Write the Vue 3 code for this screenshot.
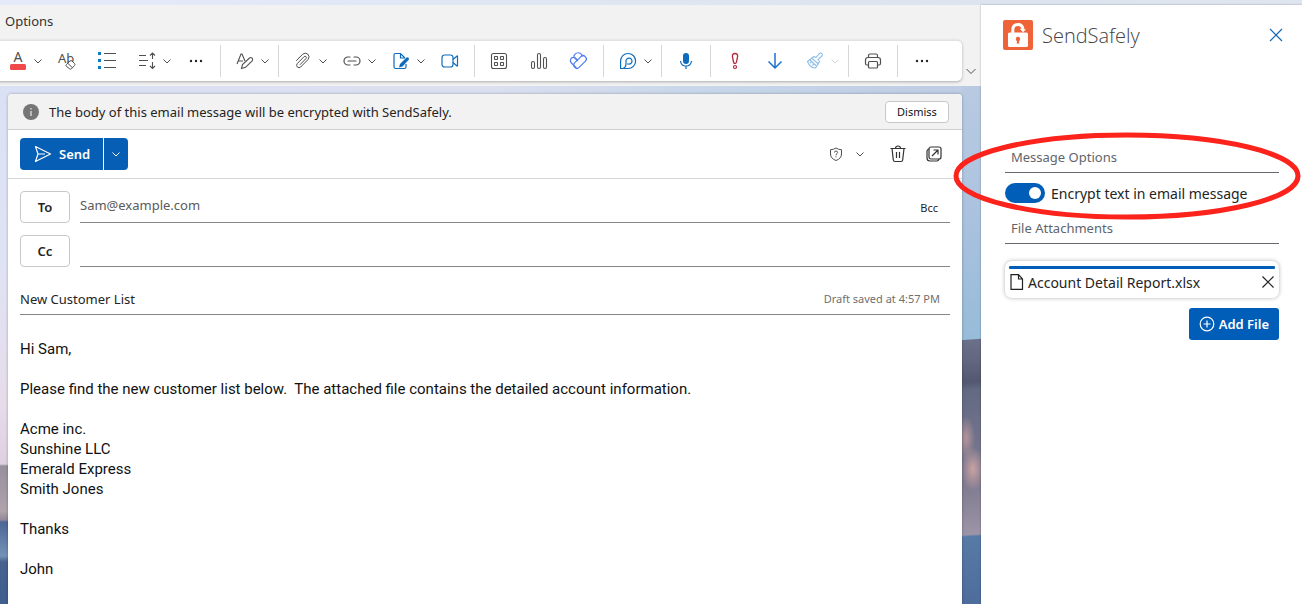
<script setup>
import { ref } from 'vue'

const gray = '#505050'
const blue = '#0f6cbd'

const icons = {
  fontColor: `<text x="10" y="11" text-anchor="middle" font-size="14" font-family="Noto Sans, sans-serif" fill="${gray}">A</text><rect x="2" y="13" width="16" height="6" rx="1.5" fill="#f0494c"/>`,
  clearFormat: `<text x="1" y="12" font-size="13" font-family="Noto Sans, sans-serif" fill="${gray}">Ab</text><path d="M9.300 13.700 13 10q1-1 2 0l2.500 2.500q1 1 0 2L14.500 17.700q-1 1-2 0l-3.200-2.400q-.8-.8 0-1.600Z" fill="#fff" stroke="${gray}"/><path d="m10.800 12.300 4.600 4.400" stroke="${gray}" fill="none"/>`,
  bullets: `<path d="M1 1h3v3H1zM1 8h3v3H1zM1 15h3v3H1z" fill="#0a7cc4"/><path d="M7 2.5h12M7 9.5h12M7 16.5h12" stroke="${gray}"/>`,
  spacing: `<path d="M2 4.5h7M2 9.5h9M2 14.5h7M15.500 2v6M15.500 11v6.500M13 4.500 15.500 2 18 4.500M13 15l2.500 2.500L18 15" fill="none" stroke="${gray}" stroke-width="1.1"/>`,
  more: `<g fill="#242424"><circle cx="5" cy="10" r="1.200"/><circle cx="10" cy="10" r="1.200"/><circle cx="15" cy="10" r="1.200"/></g>`,
  styles: `<path d="M2 13 6 3h1l3 7M3.500 10h4.500" fill="none" stroke="${gray}" stroke-width="1.100"/><path d="m6.500 17.500 1-4 7-6.500q1.500-1 2.600.2t.1 2.600l-6.700 6.500Z" fill="#fff" stroke="${gray}" stroke-width="1.100"/>`,
  attach: `<path d="m3.500 9.500 6-6.200q2.800-2.300 5.300-.2 2.500 2.700.2 5.400l-7.300 7.500q-1.700 1.500-3.400 0-1.500-1.700 0-3.400l6.800-7q1-.8 1.900 0 .8 1 0 1.900l-5.800 6" fill="none" stroke="${gray}" stroke-linecap="round"/>`,
  link: `<path d="M8 6H6a4 4 0 0 0 0 8h2M12 6h2a4 4 0 0 1 0 8h-2M6 10h8" fill="none" stroke="${gray}" stroke-width="1.200" stroke-linecap="round"/>`,
  sign: `<path d="M15 13v3q0 1.500-1.500 1.500h-9Q3 17.500 3 16V4q0-1.500 1.500-1.500H9.500L14 7M9.500 2.500V7H14" fill="none" stroke="${blue}" stroke-width="1.200"/><path d="m8 16.500 1-3.500L15.500 6.500q1-.8 2 .2t.2 2L11.500 15.500Z" fill="${blue}"/>`,
  camera: `<rect x="2" y="4" width="11" height="12" rx="2.500" fill="none" stroke="${blue}" stroke-width="1.200"/><path d="m13 8.500 4-3.500q.5-.3.500.3v9.400q0 .6-.5.300l-4-3.500" fill="none" stroke="${blue}" stroke-width="1.200"/>`,
  apps: `<g fill="none" stroke="${gray}" stroke-width="1.100"><rect x="2.500" y="2.500" width="15" height="15" rx="2"/><rect x="5.500" y="5.500" width="3" height="3" rx=".5"/><rect x="11.500" y="5.500" width="3" height="3" rx=".5"/><rect x="5.500" y="11.500" width="3" height="3" rx=".5"/><rect x="11.500" y="11.500" width="3" height="3" rx=".5"/></g>`,
  poll: `<g fill="none" stroke="${gray}" stroke-width="1.100"><rect x="2.500" y="10.500" width="3" height="7" rx="1.500"/><rect x="8.500" y="2.500" width="3" height="15" rx="1.500"/><rect x="14.500" y="6.500" width="3" height="11" rx="1.500"/></g>`,
  viva: `<g fill="none" stroke="#4f7df0" stroke-width="1.200"><path d="M7.400 17 2 11.500Q.7 9.500 2 7.500q2-2 4.300-.500L9 9.700"/><path d="M5 6.500Q4.500 4.500 6 3.200 8.500.700 11.500 2.500 13 3.500 13.500 5.500M5.500 6.500 8.700 10"/><rect x="3.500" y="7.800" width="15" height="6.400" rx="3" transform="rotate(-45 11 11)"/></g>`,
  loop: `<path d="M2.600 17.500V10A7.500 7.500 0 1 1 10 17.500Z" fill="none" stroke="${blue}" stroke-width="1.200"/><path d="M5 17.500q3-1 3-5V10a3 3 0 1 1 2.500 3h-1.500" fill="none" stroke="${blue}" stroke-width="1.200"/>`,
  mic: `<rect x="7" y="2" width="6" height="11" rx="3" fill="${blue}"/><path d="M4.500 10q.5 5 5.500 5t5.500-5M10 15v3" fill="none" stroke="${blue}" stroke-width="1.200"/>`,
  important: `<path d="M10 2.500q2.800 0 2.600 2.800L11.500 11q-.3 1.500-1.500 1.500T8.500 11L7.400 5.300Q7.200 2.500 10 2.500Z" fill="none" stroke="#b3283a" stroke-width="1.300"/><circle cx="10" cy="16" r="1.500" fill="none" stroke="#b3283a" stroke-width="1.200"/>`,
  low: `<path d="M10 2v15M3.500 10.500 10 17l6.500-6.500" fill="none" stroke="#1a73cf" stroke-width="1.500"/>`,
  brush: `<g fill="none" stroke="#8dbfe8" stroke-width="1.100"><path d="m11 6.500 3.500-4q1.200-1 2.400 0 1.200 1.300 0 2.500L13 8.500l1.500 2-4 6.500q-5.500 0-8-6.500L9 5.500Z"/><path d="m6.500 7 7 6M5 12l2-1.500M7.500 14.500l2-2M4.500 8.500l7 6.500"/></g>`,
  print: `<g fill="none" stroke="${gray}" stroke-width="1.200"><path d="M5.500 14H4q-1.500 0-1.500-1.500V9Q2.500 6.500 5 6.500h10q2.500 0 2.500 2.500v3.500Q17.500 14 16 14h-1.500"/><path d="M5.500 6.500V4.500Q5.500 3 7 3h6q1.500 0 1.500 1.500v2"/><rect x="5.500" y="10.500" width="9" height="6.500" rx="1"/></g>`,
}

const groups = [
  [
    { label: 'Font color', icon: 'fontColor', split: true },
    { label: 'Clear formatting', icon: 'clearFormat' },
    { label: 'Bullets', icon: 'bullets' },
    { label: 'Line spacing', icon: 'spacing', split: true },
    { label: 'More formatting', icon: 'more' },
  ],
  [{ label: 'Styles', icon: 'styles', split: true }],
  [
    { label: 'Attach file', icon: 'attach', split: true },
    { label: 'Link', icon: 'link', split: true },
    { label: 'Signature', icon: 'sign', split: true },
    { label: 'Video', icon: 'camera' },
  ],
  [
    { label: 'Apps', icon: 'apps' },
    { label: 'Poll', icon: 'poll' },
    { label: 'Viva', icon: 'viva' },
  ],
  [{ label: 'Loop components', icon: 'loop', split: true }],
  [{ label: 'Dictate', icon: 'mic' }],
  [
    { label: 'High importance', icon: 'important' },
    { label: 'Low importance', icon: 'low' },
    { label: 'Format painter', icon: 'brush', split: true, disabled: true },
  ],
  [{ label: 'Print', icon: 'print' }],
  [{ label: 'More options', icon: 'more' }],
]

const to = ref('Sam@example.com')
const cc = ref('')
const subject = ref('New Customer List')
const encrypt = ref(true)
const body = ref(`Hi Sam,

Please find the new customer list below.  The attached file contains the detailed account information.

Acme inc.
Sunshine LLC
Emerald Express
Smith Jones

Thanks

John`)
</script>

<template>
  <div class="window">
    <main class="compose">
      <header class="ribbon">
        <nav class="tabs"><a href="#options">Options</a></nav>
        <div class="bar-row">
          <div class="bar" role="toolbar" aria-label="Options">
            <div v-for="(group, g) in groups" :key="g" class="group">
              <button
                v-for="item in group"
                :key="item.label"
                class="tool"
                :class="{ split: item.split }"
                :aria-label="item.label"
                :disabled="item.disabled"
              >
                <svg width="20" height="20" viewBox="0 0 20 20" v-html="icons[item.icon]"></svg>
                <svg v-if="item.split" class="chev" width="10" height="10" viewBox="0 0 10 10">
                  <path d="m1.500 3.500 3.500 3.500 3.500-3.500" />
                </svg>
              </button>
            </div>
          </div>
          <button class="expand" aria-label="Expand ribbon">
            <svg class="chev" width="12" height="12" viewBox="0 0 12 12"><path d="m1.500 4 4.500 4.500L10.500 4" /></svg>
          </button>
        </div>
      </header>

      <div class="desk">
        <section class="mail">
          <div class="notice">
            <svg width="16" height="16" viewBox="0 0 16 16">
              <circle cx="8" cy="8" r="8" fill="#757575" />
              <path d="M8 7v5M8 4v1.500" stroke="#e0e0e0" stroke-width="1.300" />
            </svg>
            <span>The body of this email message will be encrypted with SendSafely.</span>
            <button>Dismiss</button>
          </div>

          <div class="actions">
            <div class="send">
              <button class="send-main">
                <svg width="18" height="18" viewBox="0 0 18 18">
                  <path d="M1.500 1.500 16.500 9l-15 7.500L4 9ZM4 9h7" fill="none" stroke="#fff" stroke-width="1.200" stroke-linejoin="round" />
                </svg>
                Send
              </button>
              <button class="send-more" aria-label="Send options">
                <svg class="chev" width="10" height="10" viewBox="0 0 10 10"><path d="m1.500 3.500 3.500 3.500 3.500-3.500" /></svg>
              </button>
            </div>
            <button class="plain shield" aria-label="Sensitivity">
              <svg width="14" height="14" viewBox="0 0 14 14">
                <path d="M7 1q2.500 1.700 5.500 1.700v4.300q0 4.500-5.500 6.500Q1.500 11.500 1.500 7V2.700Q4.500 2.700 7 1Z" fill="none" stroke="#505050" />
                <path d="M5.500 5.500Q5.500 4 7 4t1.500 1.400Q8.500 6.500 7 7.500v.8M7 9.300v1" fill="none" stroke="#505050" />
              </svg>
              <svg class="chev" width="10" height="10" viewBox="0 0 10 10"><path d="m1.500 3.500 3.500 3.500 3.500-3.500" /></svg>
            </button>
            <button class="plain" aria-label="Discard">
              <svg width="18" height="18" viewBox="0 0 18 18" fill="none" stroke="#333" stroke-width="1.200">
                <path d="M1.500 3.500h15M6.500 3.500Q6.500 1 9 1t2.500 2.500M3 3.500l1.300 11.500q.2 1.500 1.700 1.500h6q1.500 0 1.700-1.500L15 3.500M7.500 7v6M10.500 7v6" />
              </svg>
            </button>
            <button class="plain" aria-label="Open in new window">
              <svg width="18" height="18" viewBox="0 0 18 18" fill="none" stroke="#333" stroke-width="1.200">
                <rect x="4" y="2" width="12" height="12" rx="2" />
                <path d="M4 4Q2 4.500 2 6v7q0 3 3 3h7q1.500 0 2-2M7 11l6-6M8.500 5H13v4.500" />
              </svg>
            </button>
          </div>

          <div class="field">
            <button class="who">To</button>
            <div class="line">
              <input v-model="to" aria-label="To" />
              <button class="bcc">Bcc</button>
            </div>
          </div>
          <div class="field">
            <button class="who">Cc</button>
            <div class="line"><input v-model="cc" aria-label="Cc" /></div>
          </div>
          <div class="subject">
            <input v-model="subject" aria-label="Subject" />
            <span>Draft saved at 4:57 PM</span>
          </div>
          <textarea v-model="body" class="body" aria-label="Message body" spellcheck="false"></textarea>
        </section>
      </div>
    </main>

    <aside class="panel">
      <header class="brand">
        <svg width="30" height="30" viewBox="0 0 30 30">
          <rect width="30" height="30" rx="2" fill="#ee6337" />
          <path d="M9.800 13V10Q9.800 4.500 15 4.500q4.300 0 5 4.500" fill="none" stroke="#fff" stroke-width="3" />
          <path d="M16.500 8.500 23 9.500 20 12.200Z" fill="#fff" />
          <rect x="5" y="12.500" width="20" height="14.500" rx="1.500" fill="#fff" />
          <circle cx="15" cy="19" r="2.200" fill="#ee6337" />
          <path d="M14.200 19h1.600l.5 4.500h-2.600Z" fill="#ee6337" />
        </svg>
        <h1>SendSafely</h1>
        <button class="close" aria-label="Close panel">
          <svg width="14" height="14" viewBox="0 0 14 14"><path d="m1 1 12 12M13 1 1 13" stroke="#1668b5" stroke-width="1.200" /></svg>
        </button>
      </header>

      <h2>Message Options</h2>
      <div class="option">
        <input id="encrypt" v-model="encrypt" type="checkbox" role="switch" />
        <label for="encrypt">Encrypt text in email message</label>
      </div>
      <h2>File Attachments</h2>
      <div class="file">
        <div class="progress"></div>
        <div class="file-row">
          <svg width="14" height="16" viewBox="0 0 14 16">
            <path d="M1 .6h7.500L12.500 5v10.400H1ZM8.500.6V5h4" fill="none" stroke="#222" stroke-width="1.200" />
          </svg>
          <span>Account Detail Report.xlsx</span>
          <button aria-label="Remove file">
            <svg width="12" height="12" viewBox="0 0 12 12"><path d="m.5.500 11 11M11.500.500l-11 11" stroke="#222" stroke-width="1.200" /></svg>
          </button>
        </div>
      </div>
      <button class="add">
        <svg width="16" height="16" viewBox="0 0 16 16" fill="none" stroke="#fff" stroke-width="1.200">
          <circle cx="8" cy="8" r="6.800" /><path d="M8 4.500v7M4.500 8h7" />
        </svg>
        Add File
      </button>

      <svg class="highlight" width="350" height="92" viewBox="0 0 350 92">
        <ellipse cx="175" cy="46" rx="171" ry="41" fill="none" stroke="#fb231b" stroke-width="5" />
      </svg>
    </aside>
  </div>
</template>

<style>
body {
  margin: 0;
  overflow: hidden;
}
</style>

<style scoped>
.window {
  display: flex;
  box-sizing: border-box;
  min-height: 100vh;
  padding-top: 5px;
  overflow: hidden;
  background: linear-gradient(90deg, #e5eaf8, #dbe4ef 75%, #dfe5ef);
  font-family: "Noto Sans", "Open Sans", sans-serif;
  font-size: 13px;
  color: #242424;
}
button,
input,
textarea {
  font: inherit;
  color: inherit;
  border: 0;
  background: none;
  padding: 0;
  margin: 0;
  outline: 0;
}
svg {
  display: block;
  flex: none;
  overflow: visible;
}
.chev {
  fill: none;
  stroke: #505050;
  stroke-width: 1;
}
.compose {
  flex: 1;
  min-width: 0;
  display: flex;
  flex-direction: column;
}
.ribbon {
  background: #f2f2f2;
  padding-bottom: 5px;
}
.tabs {
  padding: 6px 5px 9px;
  line-height: 20px;
}
.tabs a {
  color: #333;
  text-decoration: none;
}
.bar-row {
  display: flex;
}
.bar {
  flex: 1;
  display: flex;
  height: 40px;
  margin-left: -2px;
  border-top: 1px solid #e2e2e2;
  background: #fff;
  border-radius: 0 5px 5px 0;
  box-shadow: 0 1px 3px rgba(0, 0, 0, 0.3);
}
.group {
  display: flex;
  align-items: center;
}
.group + .group::before {
  content: "";
  width: 1px;
  height: 32px;
  margin: 0 4px;
  background: #d6d6d6;
}
.tool {
  display: flex;
  align-items: center;
  gap: 5px;
  width: 40px;
  height: 32px;
  padding-left: 10px;
}
.tool.split {
  width: 49px;
}
.tool:disabled .chev {
  opacity: 0.25;
}
.expand {
  display: flex;
  align-items: flex-end;
  width: 19px;
  padding: 0 0 4px 3px;
}
.desk {
  flex: 1;
  display: flex;
  padding: 8px 19px 0 8px;
  background:
    radial-gradient(12px 22px at calc(100% - 8px) 383px, #cba2a3, transparent) no-repeat,
    radial-gradient(9px 22px at calc(100% - 15px) 352px, #b5949b, transparent) no-repeat,
    linear-gradient(176deg, #b9cae2 0, #b0c5e0 90px, #a2bfdc 180px, #97bcd9 253px, #6b6f88 254px, #62667e 275px, #535870 296px, #626a82 304px, #6d7088 340px, #807c91 400px, #9d94a7 448px, #587aa6 450px, #4d6c9c 518px) right top / 19px 100% no-repeat,
    linear-gradient(#dbe1f5 0, #e0e3f4 180px, #e6dcea 320px, #dfcfe2 378px, #96909d 380px, #b1a3ac 425px, #93889a 434px, #4a6796 436px, #7392b7 470px, #44618f 476px, #405f8f 518px) left top / 8px 100% no-repeat,
    linear-gradient(90deg, #dbe1f5, #dbe0f0 50%, #c9d7ea 70%, #bdcce3);
}
.mail {
  flex: 1;
  min-width: 0;
  display: flex;
  flex-direction: column;
  background: #fff;
  border-radius: 4px 4px 0 0;
  box-shadow: 0 0 3px rgba(0, 0, 0, 0.3);
}
.notice {
  display: flex;
  align-items: center;
  height: 35px;
  padding: 0 13px 0 15px;
  gap: 10px;
  background: #f2f2f2;
  border-bottom: 1px solid #cfcfcf;
  border-radius: 4px 4px 0 0;
}
.notice button {
  margin-left: auto;
  width: 64px;
  height: 22px;
  border: 1px solid #c8c8c8;
  border-radius: 4px;
  background: #fff;
  font-size: 11px;
  color: #111;
}
.actions {
  display: flex;
  align-items: center;
  height: 48px;
  padding: 0 19px 0 12px;
  gap: 18px;
  border-bottom: 1px solid #d8d8d8;
}
.send {
  display: flex;
  gap: 1px;
  margin-right: auto;
  color: #fff;
  font-weight: 600;
}
.send button {
  display: flex;
  align-items: center;
  height: 32px;
  background: #075eb5;
}
.send-main {
  gap: 7px;
  width: 83px;
  padding-left: 14px;
  border-radius: 4px 0 0 4px;
}
.send-more {
  justify-content: center;
  width: 24px;
  border-radius: 0 4px 4px 0;
}
.send .chev {
  stroke: #fff;
}
.plain {
  display: flex;
  align-items: center;
}
.shield {
  gap: 12px;
  padding-right: 6px;
}
.field {
  display: flex;
  gap: 10px;
  margin: 12px 12px 0;
}
.who {
  box-sizing: border-box;
  width: 50px;
  height: 32px;
  border: 1px solid #c8c8c8;
  border-radius: 4px;
  font-weight: 600;
}
.line {
  flex: 1;
  display: flex;
  align-items: center;
  padding: 0 12px 3px 0;
  border-bottom: 1px solid #868686;
}
.line input {
  flex: 1;
  min-width: 0;
  color: #5a5a5a;
}
.bcc {
  font-size: 11px;
  padding-top: 5px;
}
.subject {
  display: flex;
  align-items: center;
  height: 31px;
  margin: 16px 12px 0;
  padding-right: 10px;
  border-bottom: 1px solid #868686;
}
.subject input {
  flex: 1;
  min-width: 0;
}
.subject span {
  font-size: 11px;
  color: #707070;
}
.body {
  flex: 1;
  margin: 24px 12px 0;
  min-height: 264px;
  resize: none;
  overflow: hidden;
  font-family: Roboto, "Liberation Sans", sans-serif;
  font-size: 15px;
  line-height: 20px;
  color: #111;
}
.panel {
  position: relative;
  box-sizing: border-box;
  width: 321px;
  padding: 15px 23px 0 24px;
  background: #fff;
  box-shadow: 0 0 2px rgba(0, 0, 0, 0.3);
}
.brand {
  display: flex;
  align-items: center;
  gap: 9px;
  height: 30px;
  margin: 0 0 97px -2px;
}
h1 {
  margin: 0;
  font-family: "Open Sans", "Noto Sans", sans-serif;
  font-size: 20px;
  font-weight: 300;
  color: #444;
}
.close {
  margin: 0 -4px 0 auto;
}
h2 {
  margin: 0;
  padding: 0 6px 5px;
  border-bottom: 1px solid #66696d;
  font-size: 13px;
  line-height: 20px;
  font-weight: 400;
  color: #60656b;
}
.option {
  display: flex;
  align-items: center;
  gap: 6px;
  height: 20px;
  padding: 10px 0 15px;
  font-size: 14px;
}
.option input {
  appearance: none;
  flex: none;
  width: 40px;
  height: 20px;
  padding: 4px;
  box-sizing: border-box;
  border-radius: 10px;
  background: #8a8a8a;
}
.option input::before {
  content: "";
  display: block;
  width: 12px;
  height: 12px;
  border-radius: 50%;
  background: #fff;
}
.option input:checked {
  background: #005eb8;
}
.option input:checked::before {
  margin-left: auto;
}
.file {
  margin: 17px 0 10px;
  padding: 5px 4px 4px;
  border-radius: 7px;
  box-shadow: 0 0 4px rgba(0, 0, 0, 0.3);
}
.progress {
  height: 3px;
  border-radius: 1px;
  background: #005eb8;
}
.file-row {
  display: flex;
  align-items: center;
  gap: 4px;
  height: 24px;
  padding: 1px 1px 0;
  font-size: 14px;
}
.file-row button {
  margin-left: auto;
}
.add {
  display: flex;
  align-items: center;
  gap: 4px;
  height: 32px;
  margin-left: auto;
  padding: 0 10px;
  border-radius: 3px;
  background: #005eb8;
  color: #fff;
  font-weight: 600;
}
.highlight {
  position: absolute;
  top: 125px;
  right: 0;
  pointer-events: none;
}
</style>
